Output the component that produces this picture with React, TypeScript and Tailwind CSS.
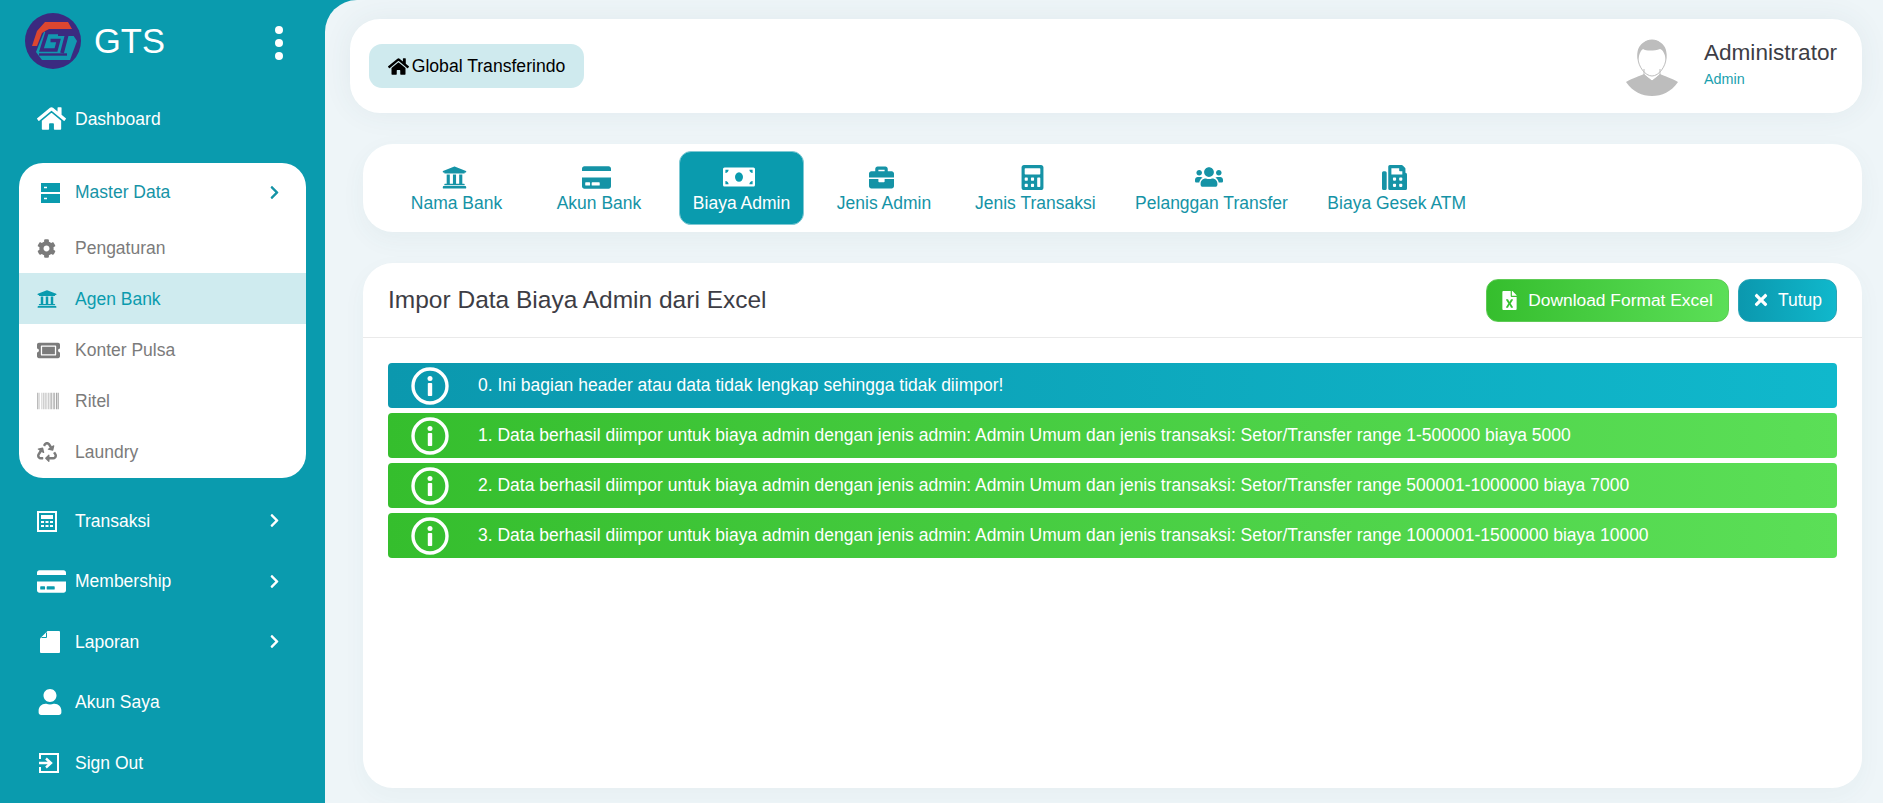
import React from "react";
import {
  FaHome, FaCog, FaUniversity, FaTicketAlt, FaBarcode, FaRecycle,
  FaCalculator, FaCreditCard, FaUser, FaChevronRight, FaMoneyBill, FaBriefcase, FaUsers, FaFax,
  FaFileExcel, FaTimes,
} from "react-icons/fa";

function Logo() {
  return (
    <svg width="56" height="56" viewBox="0 0 56 56">
      <circle cx="28" cy="28" r="28" fill="#3b2a80" />
      <path d="M7 33 L12 18 L20 9 H43 L47 16 H24 L17 20 L12 33 Z" fill="#dc4630" />
      <path d="M19 19 H46 L52 28 L45 47 H17 L11 39 Z" fill="#1298b0" />
      <path d="M35 19.5 H22 L16.5 37 H31 L33.5 27.5 H25.5" fill="none" stroke="#3b2a80" strokeWidth="3.6" />
      <path d="M33 21 H50 M42 21 L37 40" fill="none" stroke="#3b2a80" strokeWidth="3.8" />
      <path d="M14 41.5 H42" stroke="#3b2a80" strokeWidth="2.4" />
    </svg>
  );
}

function Avatar() {
  return (
    <svg width="54" height="58" viewBox="0 0 54 58">
      <path d="M1 43 C8 39 15 37 19 35 L27 42 L35 35 C39 37 46 39 53 43 C46 53 37 57 27 57 C17 57 8 53 1 43 Z" fill="#bdbdbd" />
      <path d="M13 19 C13 8 19 1 27 1 C35 1 41 8 41 19 C41 27 34 37 27 37 C20 37 13 27 13 19 Z" fill="#fff" stroke="#bdbdbd" strokeWidth="1" />
      <path d="M13 21 C10 8 18 1 27 1 C36 1 44 8 41 21 C40 15 38 11 35 10 C29 12 21 12 18 10 C15 12 14 16 13 21 Z" fill="#bdbdbd" />
      <path d="M19 30 V36 L27 42 L35 36 V30" fill="none" stroke="#bdbdbd" strokeWidth="1" />
    </svg>
  );
}

function ServerIcon() {
  return (
    <svg width="19" height="20" viewBox="0 0 19 20">
      <path d="M0 0 H19 V9 H0 Z M3 3.7 V5.3 H6 V3.7 Z" fill="#0a9bae" fillRule="evenodd" />
      <path d="M0 11 H19 V20 H0 Z M3 14.7 V16.3 H6 V14.7 Z" fill="#0a9bae" fillRule="evenodd" />
    </svg>
  );
}

function CalcOutline() {
  return (
    <svg width="20" height="22" viewBox="0 0 20 22">
      <path d="M0 1 H20 V22 H0 Z M2 3 V20 H18 V3 Z" fill="#fff" fillRule="evenodd" />
      <rect x="4" y="5" width="12" height="4" fill="#fff" />
      <path d="M4 11 H7 V13 H4 Z M8.5 11 H11.5 V13 H8.5 Z M13 11 H16 V13 H13 Z M4 15 H7 V17 H4 Z M8.5 15 H11.5 V17 H8.5 Z M13 15 H16 V17 H13 Z" fill="#fff" />
    </svg>
  );
}

function NoteIcon() {
  return (
    <svg width="20" height="22" viewBox="0 0 20 22" className="ml-[3px]">
      <path d="M7.5 0 H19 Q20 0 20 1 V21 Q20 22 19 22 H1 Q0 22 0 21 V7.5 Z" fill="#fff" />
      <path d="M6.5 1.5 V6.5 H1.5" fill="none" stroke="#0a9bae" strokeWidth="1" />
    </svg>
  );
}

function SignOutIcon() {
  return (
    <svg width="20" height="22" viewBox="0 0 20 22" className="ml-[2px]" fill="none" stroke="#fff" strokeWidth="2">
      <path d="M1 7 V2 H19 V20 H1 V15" />
      <path d="M0 11 H11 M7 6.5 L12 11 L7 15.5" strokeWidth="2.4" />
    </svg>
  );
}

function InfoIcon() {
  return (
    <svg width="38" height="38" viewBox="0 0 38 38" fill="none">
      <circle cx="19" cy="19" r="17" stroke="#fff" strokeWidth="3.4" />
      <circle cx="19" cy="11.5" r="2.5" fill="#fff" />
      <rect x="16.8" y="16" width="4.4" height="13" rx="0.8" fill="#fff" />
    </svg>
  );
}

function Dots() {
  return (
    <div className="flex flex-col gap-[5px]">
      <span className="w-[8px] h-[8px] rounded-full bg-white block" />
      <span className="w-[8px] h-[8px] rounded-full bg-white block" />
      <span className="w-[8px] h-[8px] rounded-full bg-white block" />
    </div>
  );
}

function TopRow({ icon, label, arrow }: { icon: React.ReactNode; label: string; arrow?: boolean }) {
  return (
    <div className="h-[60.5px] flex items-center pl-[37px] pr-[43px] pt-[1px] text-white text-[17.5px]">
      <div className="w-[38px] flex items-center justify-start shrink-0">{icon}</div>
      <span className="flex-1">{label}</span>
      {arrow && <FaChevronRight className="text-[15px] text-white" />}
    </div>
  );
}

function SubRow({ icon, label, active }: { icon: React.ReactNode; label: string; active?: boolean }) {
  return (
    <div className={active ? "h-[51px] flex items-center pl-[18px] pt-[1px] bg-[#cfebef] text-[#0a9bae] text-[17.5px]" : "h-[51px] flex items-center pl-[18px] pt-[1px] text-[#7b7b7b] text-[17.5px]"}>
      <div className="w-[38px] flex items-center shrink-0">{icon}</div>
      <span>{label}</span>
    </div>
  );
}

function Tab({ icon, label, active }: { icon: React.ReactNode; label: string; active?: boolean }) {
  return (
    <div className={active ? "h-[74px] min-w-[125px] px-[11px] pt-[2px] flex flex-col items-center justify-center gap-[2px] rounded-[12px] bg-[#0a9bae] text-white border border-[#7fc9d4]" : "h-[74px] min-w-[125px] px-[11px] pt-[2px] flex flex-col items-center justify-center gap-[2px] text-[#1593a6]"}>
      <div className="h-[25px] pr-[5px] flex items-center justify-center">{icon}</div>
      <span className="text-[17.5px] leading-[22px] whitespace-nowrap">{label}</span>
    </div>
  );
}

function AlertRow({ text, tone }: { text: string; tone: "info" | "ok" }) {
  return (
    <div className={tone === "info" ? "h-[45px] rounded-[4px] flex items-center text-white text-[17.5px] bg-gradient-to-r from-[#0b98ae] to-[#10b8cc]" : "h-[45px] rounded-[4px] flex items-center text-white text-[17.5px] bg-gradient-to-r from-[#35be2d] to-[#5bdf57]"}>
      <div className="w-[90px] flex justify-center pr-[6px] shrink-0"><InfoIcon /></div>
      <span>{text}</span>
    </div>
  );
}

export default function App() {
  return (
    <div className="w-[1883px] h-[803px] overflow-hidden flex bg-[#0a9bae] font-['Liberation_Sans',Arial,sans-serif]">
      <aside className="w-[325px] shrink-0 flex flex-col">
        <div className="h-[88px] flex pl-[25px] pr-[42px] pt-[13px] items-start">
          <Logo />
          <span className="ml-[13px] text-white text-[34.5px] leading-[56px] flex-1">GTS</span>
          <div className="pt-[13px]"><Dots /></div>
        </div>
        <TopRow icon={<FaHome className="text-[29px]" />} label="Dashboard" />
        <div className="mt-[14.5px] mx-[19px] pb-[1px] bg-white rounded-[24px] overflow-hidden">
          <div className="h-[59px] flex items-center pl-[22px] pr-[24px] text-[#1593a6] text-[17.5px]">
            <div className="w-[34px] flex items-center shrink-0"><ServerIcon /></div>
            <span className="flex-1">Master Data</span>
            <FaChevronRight className="text-[15px] text-[#1593a6]" />
          </div>
          <SubRow icon={<FaCog className="text-[19px]" />} label="Pengaturan" />
          <SubRow active icon={<FaUniversity className="text-[20px]" />} label="Agen Bank" />
          <SubRow icon={<FaTicketAlt className="text-[23px]" />} label="Konter Pulsa" />
          <SubRow icon={<FaBarcode className="text-[22px] text-[#a8a8a8]" />} label="Ritel" />
          <SubRow icon={<FaRecycle className="text-[20px]" />} label="Laundry" />
        </div>
        <div className="mt-[12px]">
          <TopRow icon={<CalcOutline />} label="Transaksi" arrow />
          <TopRow icon={<FaCreditCard className="text-[29px]" />} label="Membership" arrow />
          <TopRow icon={<NoteIcon />} label="Laporan" arrow />
          <TopRow icon={<FaUser className="text-[26px]" />} label="Akun Saya" />
          <TopRow icon={<SignOutIcon />} label="Sign Out" />
        </div>
      </aside>

      <main className="flex-1 bg-[#eef5f8] rounded-tl-[32px] pt-[19px] pr-[21px] flex flex-col overflow-hidden">
        <header className="ml-[25px] h-[94px] bg-white rounded-[30px] shadow-[0_0_30px_rgba(60,90,100,0.07)] flex items-center pl-[19px] pr-[25px]">
          <div className="h-[44px] w-[215px] rounded-[13px] bg-[#cfeaee] flex items-center justify-center gap-[3px] text-[17.6px] text-black">
            <FaHome className="text-[21px]" />
            <span>Global Transferindo</span>
          </div>
          <div className="flex-1" />
          <div className="pt-[4px]"><Avatar /></div>
          <div className="ml-[25px] flex flex-col">
            <span className="text-[22.6px] leading-[26px] text-[#3d3d45]">Administrator</span>
            <span className="text-[14.4px] leading-[26px] text-[#1a9fae]">Admin</span>
          </div>
        </header>

        <nav className="ml-[38px] mt-[31px] h-[88px] bg-white rounded-[30px] shadow-[0_8px_24px_rgba(60,90,100,0.05)] flex items-center pl-[31px] gap-[17.5px]">
          <Tab icon={<FaUniversity className="text-[25px]" />} label="Nama Bank" />
          <Tab icon={<FaCreditCard className="text-[29px]" />} label="Akun Bank" />
          <Tab active icon={<FaMoneyBill className="text-[32px]" />} label="Biaya Admin" />
          <Tab icon={<FaBriefcase className="text-[25px]" />} label="Jenis Admin" />
          <Tab icon={<FaCalculator className="text-[25px]" />} label="Jenis Transaksi" />
          <Tab icon={<FaUsers className="text-[28px]" />} label="Pelanggan Transfer" />
          <Tab icon={<FaFax className="text-[25px]" />} label="Biaya Gesek ATM" />
        </nav>

        <section className="ml-[38px] mt-[31px] h-[525px] bg-white rounded-[30px] shadow-[0_8px_24px_rgba(60,90,100,0.04)] flex flex-col">
          <div className="h-[75px] border-b border-[#eaeaea] flex items-center pl-[25px] pr-[25px]">
            <span className="flex-1 text-[24.5px] text-[#3d3d45]">Impor Data Biaya Admin dari Excel</span>
            <button className="h-[43px] w-[243px] rounded-[12px] border border-[#5ecb55] bg-gradient-to-r from-[#35be2d] to-[#5bdf57] text-white text-[17.4px] pr-[2px] flex items-center justify-center gap-[9px]">
              <FaFileExcel className="text-[19px]" />
              <span>Download Format Excel</span>
            </button>
            <button className="ml-[9px] h-[43px] w-[99px] rounded-[12px] border border-[#2aa5b6] bg-gradient-to-r from-[#0b98ae] to-[#10b8cc] text-white text-[17.5px] pr-[1px] flex items-center justify-center gap-[8px]">
              <FaTimes className="text-[18px]" />
              <span>Tutup</span>
            </button>
          </div>
          <div className="px-[25px] pt-[25px] flex flex-col gap-[5px]">
            <AlertRow tone="info" text="0. Ini bagian header atau data tidak lengkap sehingga tidak diimpor!" />
            <AlertRow tone="ok" text="1. Data berhasil diimpor untuk biaya admin dengan jenis admin: Admin Umum dan jenis transaksi: Setor/Transfer range 1-500000 biaya 5000" />
            <AlertRow tone="ok" text="2. Data berhasil diimpor untuk biaya admin dengan jenis admin: Admin Umum dan jenis transaksi: Setor/Transfer range 500001-1000000 biaya 7000" />
            <AlertRow tone="ok" text="3. Data berhasil diimpor untuk biaya admin dengan jenis admin: Admin Umum dan jenis transaksi: Setor/Transfer range 1000001-1500000 biaya 10000" />
          </div>
        </section>
      </main>
    </div>
  );
}
